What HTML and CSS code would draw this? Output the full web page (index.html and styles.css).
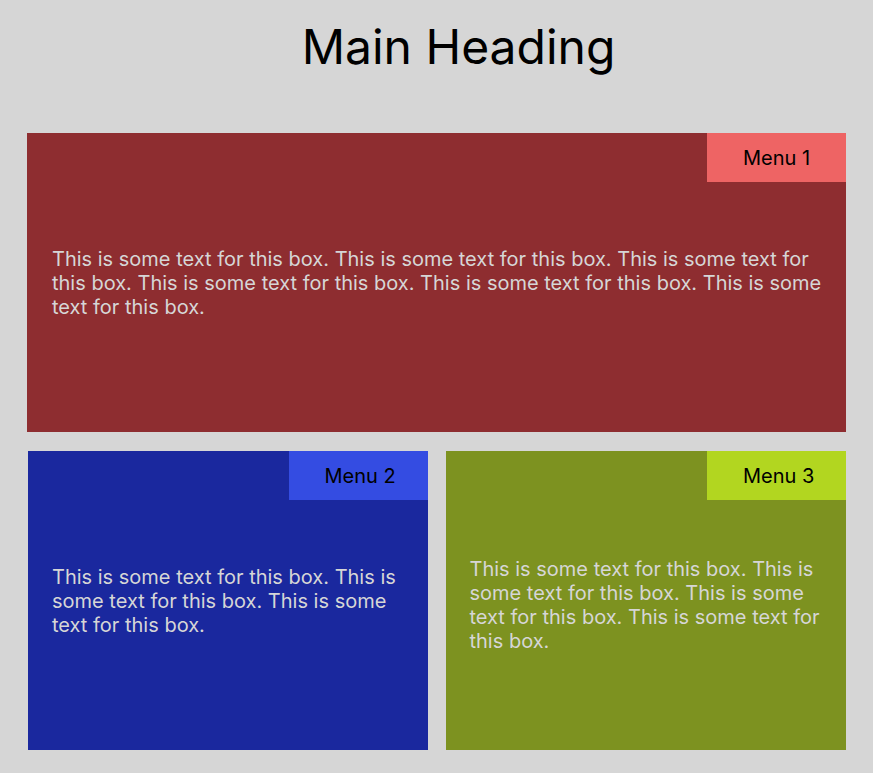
FILE: index.html
```html
<!DOCTYPE html>
<html lang="en">
<head>
<meta charset="utf-8">
<title>Main Heading</title>
<link rel="stylesheet" href="styles.css">
</head>
<body>
<h1 class="title">Main Heading</h1>
<div class="grid">
  <section class="box box-1">
    <div class="menu menu-1">Menu 1</div>
    <p class="text">This is some text for this box. This is some text for this box. This is some text for this box. This is some text for this box. This is some text for this box. This is some text for this box.</p>
  </section>
  <section class="box box-2">
    <div class="menu menu-2">Menu 2</div>
    <p class="text">This is some text for this box. This is some text for this box. This is some text for this box.</p>
  </section>
  <section class="box box-3">
    <div class="menu menu-3">Menu 3</div>
    <p class="text text-low">This is some text for this box. This is some text for this box. This is some text for this box. This is some text for this box.</p>
  </section>
</div>
</body>
</html>
```

FILE: styles.css
```css
html, body {
  margin: 0;
  background: #d6d6d6;
}
body {
  padding: 18px 27px 23px;
  font-family: Inter, "Noto Sans", sans-serif;
}
.title {
  margin: 0 0 57px;
  padding-left: 44px;
  font-size: 48px;
  font-weight: 400;
  line-height: 58px;
  text-align: center;
  color: #000;
}
.grid {
  display: grid;
  grid-template-columns: 1fr 1fr;
  grid-template-rows: 299px 299px;
  column-gap: 18px;
  row-gap: 19px;
}
.box {
  position: relative;
  display: flex;
  flex-direction: column;
  justify-content: center;
  padding: 0 24px;
}
.box-1 {
  grid-column: 1 / span 2;
  padding-left: 25px;
  background: #8e2d30;
}
.box-2 {
  margin-left: 1px;
  background: #1a289e;
}
.box-3 {
  background: #7d9220;
}
.menu {
  position: absolute;
  top: 0;
  right: 0;
  box-sizing: border-box;
  width: 139px;
  height: 49px;
  padding-left: 36px;
  display: flex;
  align-items: center;
  font-size: 20px;
  color: #000;
}
.menu-1 { background: #ee6464; }
.menu-2 { background: #344ce2; }
.menu-3 { background: #b2d620; }
.text {
  margin: 0;
  font-size: 20px;
  line-height: 24px;
  color: #d6d6d6;
}
.text-low {
  padding-top: 9px;
}
```
